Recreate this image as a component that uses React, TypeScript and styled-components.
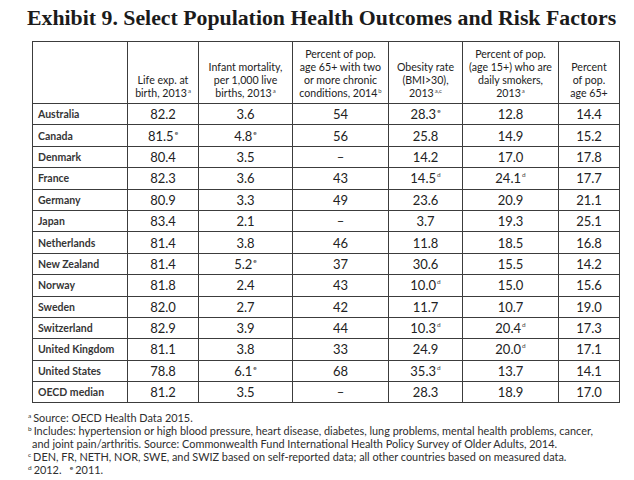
import React from 'react';
import styled, { createGlobalStyle } from 'styled-components';

const Global = createGlobalStyle`
  html, body { margin: 0; padding: 0; background: #fff; }
  body { width: 634px; height: 480px; overflow: hidden; }
`;

const Page = styled.div`
  width: 634px;
  height: 480px;
  box-sizing: border-box;
  padding-top: 5px;
  display: flex;
  flex-direction: column;
`;

const Title = styled.h1`
  margin: 0 0 0 27px;
  font-family: "Liberation Serif", serif;
  font-weight: 700;
  font-size: 21.8px;
  line-height: 26px;
  color: #1b1b1b;
  white-space: nowrap;
`;

const Table = styled.table`
  margin: 10px 0 0 32px;
  width: 587px;
  border-collapse: collapse;
  table-layout: fixed;
  font-family: Lato, "Open Sans", sans-serif;
  color: #222;
`;

const HeadCell = styled.th`
  border: 1px solid #3c3c3c;
  height: 58px;
  padding: 0 2px 3px;
  vertical-align: bottom;
  text-align: center;
  font-weight: 400;
  font-size: 10.6px;
  line-height: 13px;
`;

const Cell = styled.td`
  border: 1px solid #3c3c3c;
  height: 20.4px;
  padding: 0;
  text-align: center;
  vertical-align: middle;
  font-size: 13px;
  line-height: 14px;
`;

const CountryCell = styled(Cell)`
  text-align: left;
  padding-left: 5px;
  font-size: 10.5px;
  font-weight: 700;
  color: #363636;
`;

const Sup = styled.sup<{ $big?: boolean }>`
  font-size: ${(p) => (p.$big ? '6.5px' : '6px')};
  line-height: 0;
  vertical-align: ${(p) => (p.$big ? '6px' : '4px')};
  margin-left: 1px;
  color: #444;
`;

const Notes = styled.div`
  margin: 9px 0 0 28px;
  font-family: Lato, "Open Sans", sans-serif;
  font-size: 10.9px;
  line-height: 12.8px;
  color: #2e2e2e;
`;

const NoteLine = styled.div<{ $indent?: boolean }>`
  height: 12.8px;
  padding-left: ${(p) => (p.$indent ? '4px' : '0')};
  white-space: nowrap;
`;

const NoteSup = styled.sup`
  font-size: 6.5px;
  line-height: 0;
  vertical-align: 4px;
  margin-right: 2px;
`;

type Val = [string, string?];
type Row = { country: string; vals: Val[] };

const rows: Row[] = [
  { country: 'Australia', vals: [['82.2'], ['3.6'], ['54'], ['28.3', 'e'], ['12.8'], ['14.4']] },
  { country: 'Canada', vals: [['81.5', 'e'], ['4.8', 'e'], ['56'], ['25.8'], ['14.9'], ['15.2']] },
  { country: 'Denmark', vals: [['80.4'], ['3.5'], ['–'], ['14.2'], ['17.0'], ['17.8']] },
  { country: 'France', vals: [['82.3'], ['3.6'], ['43'], ['14.5', 'd'], ['24.1', 'd'], ['17.7']] },
  { country: 'Germany', vals: [['80.9'], ['3.3'], ['49'], ['23.6'], ['20.9'], ['21.1']] },
  { country: 'Japan', vals: [['83.4'], ['2.1'], ['–'], ['3.7'], ['19.3'], ['25.1']] },
  { country: 'Netherlands', vals: [['81.4'], ['3.8'], ['46'], ['11.8'], ['18.5'], ['16.8']] },
  { country: 'New Zealand', vals: [['81.4'], ['5.2', 'e'], ['37'], ['30.6'], ['15.5'], ['14.2']] },
  { country: 'Norway', vals: [['81.8'], ['2.4'], ['43'], ['10.0', 'd'], ['15.0'], ['15.6']] },
  { country: 'Sweden', vals: [['82.0'], ['2.7'], ['42'], ['11.7'], ['10.7'], ['19.0']] },
  { country: 'Switzerland', vals: [['82.9'], ['3.9'], ['44'], ['10.3', 'd'], ['20.4', 'd'], ['17.3']] },
  { country: 'United Kingdom', vals: [['81.1'], ['3.8'], ['33'], ['24.9'], ['20.0', 'd'], ['17.1']] },
  { country: 'United States', vals: [['78.8'], ['6.1', 'e'], ['68'], ['35.3', 'd'], ['13.7'], ['14.1']] },
  { country: 'OECD median', vals: [['81.2'], ['3.5'], ['–'], ['28.3'], ['18.9'], ['17.0']] },
];

const widths = [95, 71, 94, 96, 74, 96, 61];

export default function App() {
  return (
    <Page>
      <Global />
      <Title>Exhibit 9. Select Population Health Outcomes and Risk Factors</Title>
      <Table>
        <colgroup>
          {widths.map((w, i) => (
            <col key={i} style={{ width: w }} />
          ))}
        </colgroup>
        <thead>
          <tr>
            <HeadCell />
            <HeadCell>
              Life exp. at<br />birth, 2013<Sup>a</Sup>
            </HeadCell>
            <HeadCell>
              Infant mortality,<br />per 1,000 live<br />births, 2013<Sup>a</Sup>
            </HeadCell>
            <HeadCell>
              Percent of pop.<br />age 65+ with two<br />or more chronic<br />conditions, 2014<Sup>b</Sup>
            </HeadCell>
            <HeadCell>
              Obesity rate<br />(BMI&gt;30),<br />2013<Sup>a,c</Sup>
            </HeadCell>
            <HeadCell>
              Percent of pop.<br />(age 15+) who are<br />daily smokers,<br />2013<Sup>a</Sup>
            </HeadCell>
            <HeadCell>
              Percent<br />of pop.<br />age 65+
            </HeadCell>
          </tr>
        </thead>
        <tbody>
          {rows.map((r) => (
            <tr key={r.country}>
              <CountryCell>{r.country}</CountryCell>
              {r.vals.map(([v, s], i) => (
                <Cell key={i}>
                  {v}
                  {s && <Sup $big>{s}</Sup>}
                </Cell>
              ))}
            </tr>
          ))}
        </tbody>
      </Table>
      <Notes>
        <NoteLine><NoteSup>a</NoteSup>Source: OECD Health Data 2015.</NoteLine>
        <NoteLine>
          <NoteSup>b</NoteSup>Includes: hypertension or high blood pressure, heart disease, diabetes, lung problems, mental health problems, cancer,
        </NoteLine>
        <NoteLine $indent>
          and joint pain/arthritis. Source: Commonwealth Fund International Health Policy Survey of Older Adults, 2014.
        </NoteLine>
        <NoteLine>
          <NoteSup>c</NoteSup>DEN, FR, NETH, NOR, SWE, and SWIZ based on self-reported data; all other countries based on measured data.
        </NoteLine>
        <NoteLine>
          <NoteSup>d</NoteSup>2012.&nbsp;&nbsp;&nbsp;<NoteSup>e</NoteSup>2011.
        </NoteLine>
      </Notes>
    </Page>
  );
}
